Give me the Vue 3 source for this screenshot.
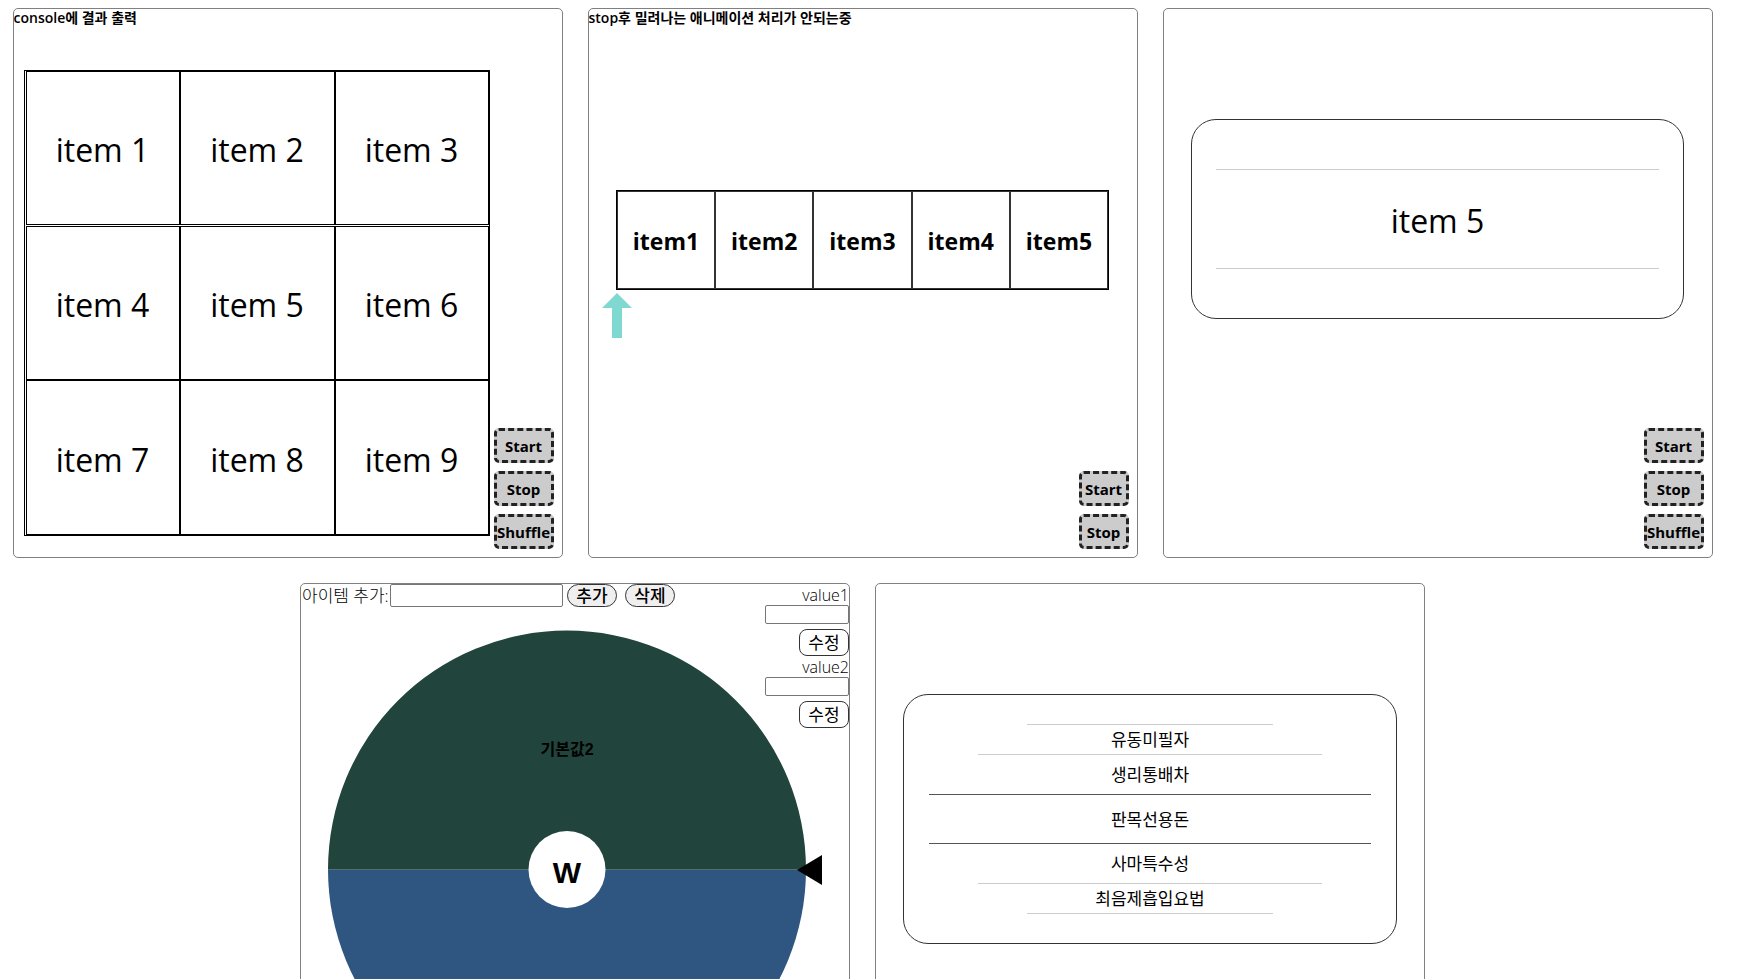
<script setup>
import { ref } from 'vue'

const gridItems = Array.from({ length: 9 }, (_, i) => `item ${i + 1}`)
const stripItems = Array.from({ length: 5 }, (_, i) => `item${i + 1}`)
const slotItems = [
  { text: '유동미필자', size: 'small' },
  { text: '생리통배차', size: 'medium' },
  { text: '판목선용돈', size: 'large' },
  { text: '사마특수성', size: 'medium' },
  { text: '최음제흡입요법', size: 'small' },
]
const newItem = ref('')
const values = ref(['', ''])
</script>

<template>
  <main class="board">
    <section class="card">
      <h2 class="title">console에 결과 출력</h2>
      <div class="grid">
        <div v-for="item in gridItems" :key="item" class="cell">{{ item }}</div>
      </div>
      <div class="actions">
        <button type="button">Start</button>
        <button type="button">Stop</button>
        <button type="button">Shuffle</button>
      </div>
    </section>

    <section class="card">
      <h2 class="title">stop후 밀려나는 애니메이션 처리가 안되는중</h2>
      <div class="strip-area">
        <div class="strip">
          <div v-for="item in stripItems" :key="item" class="strip-item">{{ item }}</div>
        </div>
        <svg class="arrow" width="30" height="45" viewBox="0 0 30 45" aria-hidden="true">
          <path d="M15 0 L30 15 H20 V45 H10 V15 H0 Z" fill="#7fd9d0" />
        </svg>
      </div>
      <div class="actions narrow">
        <button type="button">Start</button>
        <button type="button">Stop</button>
      </div>
    </section>

    <section class="card">
      <div class="panel">
        <div class="single">item 5</div>
      </div>
      <div class="actions">
        <button type="button">Start</button>
        <button type="button">Stop</button>
        <button type="button">Shuffle</button>
      </div>
    </section>

    <section class="card wheel-card">
      <div class="toolbar">
        <label for="new-item">아이템 추가:</label>
        <input id="new-item" v-model="newItem" type="text" />
        <button type="button">추가</button>
        <button type="button">삭제</button>
      </div>
      <div class="wheel-area">
        <svg class="wheel" viewBox="0 0 480 480" role="img" aria-label="wheel">
          <path d="M1 240.5 A239 239 0 0 1 479 240.5 Z" fill="#21443c" />
          <path d="M1 240.5 A239 239 0 0 0 479 240.5 Z" fill="#2f5680" />
          <path d="M1 240.5 H479" stroke="#53706f" />
          <circle cx="240" cy="240.5" r="38.5" fill="#fff" />
          <text class="wheel-label" x="240" y="126">기본값2</text>
          <text class="wheel-hub" x="240" y="254">W</text>
        </svg>
        <svg class="pointer" width="25" height="30" viewBox="0 0 25 30" aria-hidden="true">
          <path d="M0 15 L25 0 V30 Z" />
        </svg>
      </div>
      <div class="values">
        <div v-for="n in 2" :key="n" class="value">
          <label :for="`value-${n}`">value{{ n }}</label>
          <input :id="`value-${n}`" v-model="values[n - 1]" type="text" />
          <button type="button">수정</button>
        </div>
      </div>
    </section>

    <section class="card">
      <div class="panel slot">
        <div v-for="item in slotItems" :key="item.text" class="row" :class="item.size">
          {{ item.text }}
        </div>
      </div>
    </section>
  </main>
</template>

<style>
html {
  scrollbar-width: none;
}
</style>

<style scoped>
.board {
  display: flex;
  flex-wrap: wrap;
  justify-content: center;
  gap: 25px;
  padding: 8px 27px 8px 0;
  color: #000;
  font-family: "Open Sans", "Noto Sans CJK KR", sans-serif;
  font-size: 17px;
}
.board *,
.board {
  box-sizing: border-box;
}
button,
input {
  font-family: inherit;
  color: inherit;
}
.card {
  position: relative;
  display: flex;
  flex-direction: column;
  width: 550px;
  max-width: 100%;
  height: 550px;
  border: 1px solid #808080;
  border-radius: 5px;
}
.title {
  height: 18px;
  margin: 0;
  font-size: 14px;
  line-height: 18px;
  font-weight: 600;
}
.grid {
  display: grid;
  grid-template: repeat(3, 1fr) / 154fr 155fr 154fr;
  width: 466px;
  max-width: 100%;
  aspect-ratio: 1;
  margin: 43px 0 0 10px;
  padding-left: 1px;
  border: 1px solid #000;
}
.cell {
  display: flex;
  align-items: center;
  justify-content: center;
  padding-top: 4px;
  border: 1px solid #000;
  font-size: 32px;
  line-height: 40px;
  font-weight: 400;
}
.cell:nth-child(-n + 3) {
  margin-bottom: 1px;
}
.actions {
  position: absolute;
  right: 8px;
  bottom: 8px;
  display: flex;
  flex-direction: column;
  gap: 8px;
  width: 60px;
}
.actions.narrow {
  width: 50px;
}
.actions button {
  display: flex;
  align-items: center;
  justify-content: center;
  height: 35px;
  padding: 0;
  border: 3px dashed #222;
  border-radius: 5px;
  background: #ccc;
  font-size: 15px;
  line-height: 20px;
  font-weight: 700;
}
.strip-area {
  position: relative;
  margin: 163px 5% 0;
}
.strip {
  display: grid;
  grid-template-columns: repeat(5, 1fr);
  height: 100px;
  border: 1px solid #000;
}
.strip-item {
  display: flex;
  align-items: center;
  justify-content: center;
  padding-top: 2px;
  border: 1px solid #333;
  font-size: 23px;
  line-height: 32px;
  font-weight: 700;
}
.arrow {
  position: absolute;
  top: 103px;
  left: -14px;
}
.panel {
  display: flex;
  flex-direction: column;
  align-items: center;
  justify-content: center;
  height: 200px;
  margin: 110px 5% 0;
  border: 1px solid #333;
  border-radius: 25px;
}
.single {
  display: flex;
  align-items: center;
  justify-content: center;
  width: 90%;
  height: 100px;
  padding-top: 4px;
  border: solid #ccc;
  border-width: 1px 0;
  font-size: 32px;
  line-height: 40px;
  font-weight: 400;
}
.slot {
  height: 250px;
}
.row {
  display: flex;
  align-items: center;
  justify-content: center;
  padding-top: 1px;
  border: 0 solid #ccc;
  font-size: 17px;
  line-height: 24px;
  font-weight: 400;
}
.row.small {
  width: 50%;
  height: 30px;
}
.row.medium {
  width: 70%;
  height: 40px;
}
.row.large {
  width: 90%;
  height: 50px;
  border-color: #555;
  border-width: 1px 0;
}
.row:first-child,
.row:nth-child(2) {
  border-top-width: 1px;
}
.row:last-child,
.row:nth-child(4) {
  border-bottom-width: 1px;
}
.toolbar {
  display: flex;
  align-items: stretch;
  height: 23px;
  padding-left: 1px;
}
.toolbar label {
  width: 88px;
  line-height: 23px;
  font-weight: 300;
  white-space: nowrap;
}
.toolbar input {
  width: 173px;
  margin-right: 4px;
  border: 1px solid #767676;
  border-radius: 2px;
}
.toolbar button {
  width: 50px;
  margin-right: 8px;
  padding: 0;
  border: 1px solid #333;
  border-radius: 12px;
  background: #efefef;
  font-size: 17px;
  line-height: 20px;
  font-weight: 500;
}
.wheel-area {
  position: relative;
  width: 480px;
  margin: 22px 0 0 26px;
}
.wheel {
  display: block;
  width: 100%;
}
.wheel-label,
.wheel-hub {
  font-family: "Liberation Sans", "Noto Sans CJK KR", sans-serif;
  font-size: 16px;
  font-weight: 700;
  text-anchor: middle;
}
.wheel-hub {
  font-size: 30px;
}
.pointer {
  position: absolute;
  top: 226px;
  left: 470px;
}
.values {
  position: absolute;
  top: 0;
  right: 0;
  width: 84px;
}
.value {
  display: flex;
  flex-direction: column;
  align-items: flex-end;
}
.value label {
  height: 21px;
  font-size: 16px;
  line-height: 22px;
  font-weight: 300;
}
.value input {
  width: 100%;
  height: 19px;
  margin-bottom: 5px;
  border: 1px solid #767676;
  border-radius: 2px;
}
.value button {
  width: 50px;
  height: 27px;
  padding: 0;
  border: 1px solid #333;
  border-radius: 8px;
  background: #fff;
  font-size: 17px;
  line-height: 24px;
  font-weight: 400;
}
</style>
